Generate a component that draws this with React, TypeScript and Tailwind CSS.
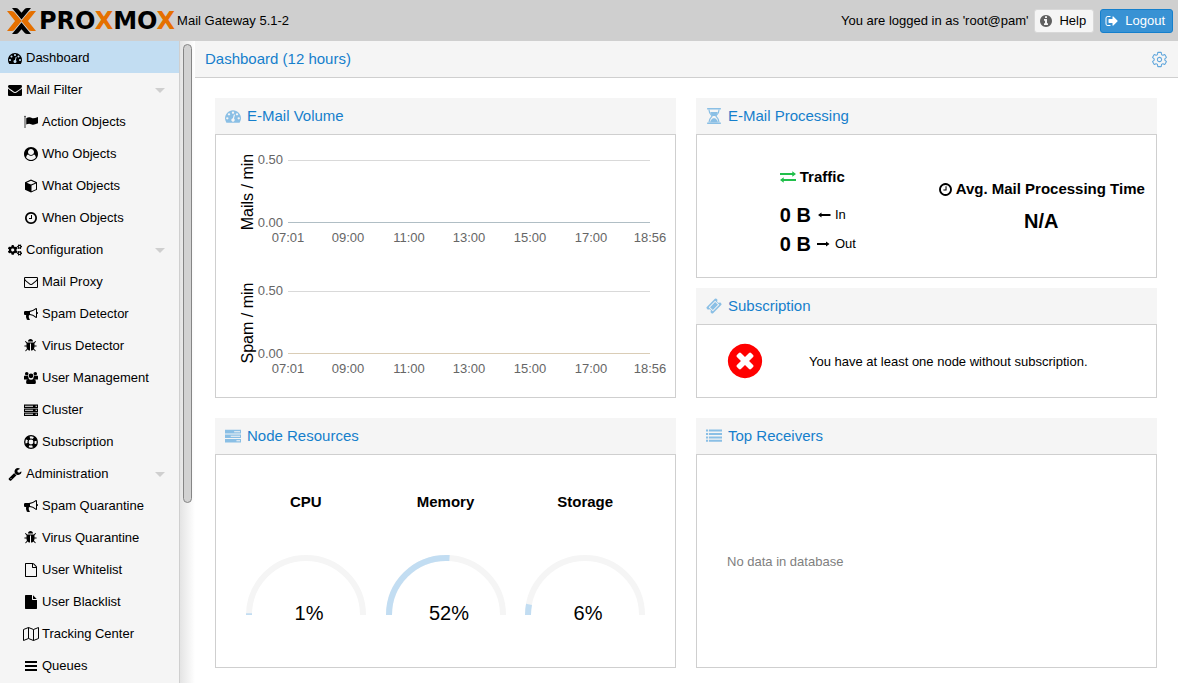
import type { ReactNode } from 'react';
import { FaCogs } from 'react-icons/fa';
import { IoSettingsOutline } from 'react-icons/io5';

/* ---------- Icons ---------- */

const DISC =
  'q0 209-103 385.5t-279.5 279.5-385.5 103-385.5-103-279.5-279.5-103-385.5 103-385.5 279.5-279.5 385.5-103 385.5 103 279.5 279.5 103 385.5z';

const PATHS = {
  dashboard:
    'M384 1152q0-53-37.5-90.5t-90.5-37.5-90.5 37.5-37.5 90.5 37.5 90.5 90.5 37.5 90.5-37.5 37.5-90.5zm192-448q0-53-37.5-90.5t-90.5-37.5-90.5 37.5-37.5 90.5 37.5 90.5 90.5 37.5 90.5-37.5 37.5-90.5zm428 481l101-382q6-26-7.5-48.5t-38.5-29.5-48 6.5-30 39.5l-101 382q-60 5-107 43.5t-63 98.5q-20 77 20 146t117 89 146-20 89-117q16-60-6-117t-72-91zm660-33q0-53-37.5-90.5t-90.5-37.5-90.5 37.5-37.5 90.5 37.5 90.5 90.5 37.5 90.5-37.5 37.5-90.5zm-640-640q0-53-37.5-90.5t-90.5-37.5-90.5 37.5-37.5 90.5 37.5 90.5 90.5 37.5 90.5-37.5 37.5-90.5zm448 192q0-53-37.5-90.5t-90.5-37.5-90.5 37.5-37.5 90.5 37.5 90.5 90.5 37.5 90.5-37.5 37.5-90.5zm320 448q0 261-141 483-19 29-54 29h-1402q-35 0-54-29-141-221-141-483 0-182 71-348t191-286 286-191 348-71 348 71 286 191 191 286 71 348z',
  envelope:
    'M1792 710v794q0 66-47 113t-113 47h-1472q-66 0-113-47t-47-113v-794q44 49 101 87 362 246 497 345 57 42 92.5 65.5t94.5 48 110 24.5h2q51 0 110-24.5t94.5-48 92.5-65.5q170-123 498-345 57-39 100-87zm0-294q0 79-49 151t-122 123q-376 261-468 325-10 7-42.5 31t-54 38.5-52 32.5-57.5 27-50 9h-2q-23 0-50-9t-57.5-27-52-32.5-54-38.5-42.5-31q-91-64-262-182.5t-205-142.5q-62-42-117-115.5t-55-136.5q0-78 41.5-130t118.5-52h1472q65 0 112.5 47t47.5 113z',
  envelopeOpen:
    'M1664 1504v-768q-32 36-69 66-268 206-426 338-51 43-83 67t-86.5 48.5-102.5 24.5h-2q-48 0-102.5-24.5t-86.5-48.5-83-67q-158-132-426-338-37-30-69-66v768q0 13 9.5 22.5t22.5 9.5h1472q13 0 22.5-9.5t9.5-22.5zm0-1051v-24.5l-.5-13-3-12.5-5.5-9-9-7.5-14-2.5h-1472q-13 0-22.5 9.5t-9.5 22.5q0 168 147 284 193 152 401 317 6 5 35 29.5t46 37.5 44.5 31.5 50.5 27.5 43 9h2q20 0 43-9t50.5-27.5 44.5-31.5 46-37.5 35-29.5q208-165 401-317 54-43 100.5-115.5t46.5-131.5zm128-37v1088q0 66-47 113t-113 47h-1472q-66 0-113-47t-47-113v-1088q0-66 47-113t113-47h1472q66 0 113 47t47 113z',
  flag: 'M32 192a96 96 0 1 1 192 0l-48 60v1412h-96v-1412zM288 400q180-120 380-120t430 130q180 40 694-170v830q-514 220-694 170t-430-130q-200 0-380 120z',
  userCircle:
    'M1523 1339q-22-155-87.5-257.5t-184.5-118.5q-67 74-159.5 115.5t-195.5 41.5-195.5-41.5-159.5-115.5q-119 16-184.5 118.5t-87.5 257.5q106 150 271 237.5t356 87.5 356-87.5 271-237.5zm-243-699q0-159-112.5-271.5t-271.5-112.5-271.5 112.5-112.5 271.5 112.5 271.5 271.5 112.5 271.5-112.5 112.5-271.5zm512 256q0 182-71 347.5t-190.5 286-285.5 191.5-349 71q-182 0-348-71t-286-191-191-286-71-348 71-348 191-286 286-191 348-71 348 71 286 191 191 286 71 348z',
  clock:
    'M1024 544v448q0 14-9 23t-23 9h-320q-14 0-23-9t-9-23v-64q0-14 9-23t23-9h224v-352q0-14 9-23t23-9h64q14 0 23 9t9 23zm416 352q0-148-73-273t-198-198-273-73-273 73-198 198-73 273 73 273 198 198 273 73 273-73 198-198 73-273zm224 0' +
    DISC,
  bullhorn:
    'M1664 640q53 0 90.5 37.5t37.5 90.5-37.5 90.5-90.5 37.5v384q0 52-38 90t-90 38q-417-347-812-380-58 19-91 66t-31 100.5 40 92.5q-20 33-23 65.5t6 58 33.5 55 48 50 61.5 50.5q-29 58-111.5 83t-168.5 11.5-132-55.5q-7-23-29.5-87.5t-32-94.5-23-89-15-101 3.5-98.5 22-110.5h-122q-66 0-113-47t-47-113v-192q0-66 47-113t113-47h480q435 0 896-384 52 0 90 38t38 90v384zm-128 604v-954q-394 302-768 343v270q377 42 768 341z',
  bug: 'M1632 896q0 26-19 45t-45 19h-224q0 171-67 290l208 209q19 19 19 45t-19 45q-18 19-45 19t-45-19l-198-197q-5 5-15 13t-42 28.5-65 36.5-82 29-97 13v-896h-128v896q-51 0-101.5-13.5t-87-33-66-39-43.5-32.5l-15-14-183 207q-20 21-48 21-24 0-43-16-19-18-20.5-44.5t15.5-46.5l202-227q-58-114-58-274h-224q-26 0-45-19t-19-45 19-45 45-19h224v-294l-173-173q-19-19-19-45t19-45 45-19 45 19l173 173h844l173-173q19-19 45-19t45 19 19 45-19 45l-173 173v294h224q26 0 45 19t19 45zm-480-576h-640q0-133 93.5-226.5t226.5-93.5 226.5 93.5 93.5 226.5z',
  wrench:
    'M448 1472q0-26-19-45t-45-19-45 19-19 45 19 45 45 19 45-19 19-45zm644-420l-682 682q-37 37-90 37-52 0-91-37l-106-108q-38-36-38-90 0-53 38-91l681-681q39 98 114.5 173.5t173.5 114.5zm634-435q0 39-23 106-47 134-164.5 217.5t-258.5 83.5q-185 0-316.5-131.5t-131.5-316.5 131.5-316.5 316.5-131.5q58 0 121.5 16.5t107.5 46.5q16 11 16 28t-16 28l-293 169v224l193 107q5-3 79-48.5t135.5-81 70.5-35.5q15 0 23.5 10t8.5 25z',
  file: 'M1152 512v-472q22 14 36 28l408 408q14 14 28 36h-472zm-128 32q0 40 28 68t68 28h544v1056q0 40-28 68t-68 28h-1344q-40 0-68-28t-28-68v-1600q0-40 28-68t68-28h800v544z',
  fileOutline:
    'M1596 380q28 28 48 76t20 88v1152q0 40-28 68t-68 28h-1344q-40 0-68-28t-28-68v-1600q0-40 28-68t68-28h896q40 0 88 20t76 48zm-444-244v376h376q-10-29-22-41l-313-313q-12-12-41-22zm384 1528v-1024h-416q-40 0-68-28t-28-68v-416h-768v1536h1280z',
  bars: 'M128 1280h1536v256h-1536zM128 768h1536v256h-1536zM128 256h1536v256h-1536z',
  list: 'M0 176h240v224h-240zM336 176h1456v224h-1456zM0 560h240v224h-240zM336 560h1456v224h-1456zM0 944h240v224h-240zM336 944h1456v224h-1456zM0 1328h240v224h-240zM336 1328h1456v224h-1456z',
  tasks:
    'M0 208h1792v400h-1792zM1024 352v112h656v-112zM0 720h1792v400h-1792zM640 864v112h1040v-112zM0 1232h1792v400h-1792zM1280 1376v112h400v-112z',
  server:
    'M0 192h1792v448h-1792zM128 352v128h1024v-128zM1472 352v128h192v-128zM0 704h1792v448h-1792zM128 864v128h1024v-128zM1472 864v128h192v-128zM0 1216h1792v448h-1792zM128 1376v128h1024v-128zM1472 1376v128h192v-128z',
  cube: 'M896 64l768 352v960l-768 352-768-352v-960zM896 208l-560 256 560 240 560-240zM960 830v740l576-268v-720z',
  users:
    'M896 320a300 300 0 1 1 0 600a300 300 0 1 1 0-600zM350 128a230 230 0 1 1 0 460a230 230 0 1 1 0-460zM1442 128a230 230 0 1 1 0 460a230 230 0 1 1 0-460zM-64 1000q0-420 220-420q190 140 350 10q0 220 150 370q-160 10-250 120h-360q-110 0-110-80zM1856 1000q0-420-220-420q-190 140-350 10q0 220-150 370q160 10 250 120h360q110 0 110-80zM560 980q336 260 672 0q290 30 290 480q0 204-204 204h-844q-204 0-204-204q0-450 290-480z',
  info:
    'M1152 1376v-160q0-14-9-23t-23-9h-96v-512q0-14-9-23t-23-9h-320q-14 0-23 9t-9 23v160q0 14 9 23t23 9h96v320h-96q-14 0-23 9t-9 23v160q0 14 9 23t23 9h448q14 0 23-9t9-23zm-128-896v-160q0-14-9-23t-23-9h-192q-14 0-23 9t-9 23v160q0 14 9 23t23 9h192q14 0 23-9t9-23zm640 416' +
    DISC,
  times:
    'M1277 1122q0-26-19-45l-181-181 181-181q19-19 19-45 0-27-19-46l-90-90q-19-19-46-19-26 0-45 19l-181 181-181-181q-19-19-45-19-27 0-46 19l-90 90q-19 19-19 46 0 26 19 45l181 181-181 181q-19 19-19 45 0 27 19 46l90 90q19 19 46 19 26 0 45-19l181-181 181 181q19 19 45 19 27 0 46-19l90-90q19-19 19-46zm387-226' +
    DISC,
  signOut:
    'M704 1440q0 4 1 20t.5 26.5-3 23.5-10 19.5-20.5 6.5h-320q-119 0-203.5-84.5t-84.5-203.5v-704q0-119 84.5-203.5t203.5-84.5h320q13 0 22.5 9.5t9.5 22.5q0 4 1 20t.5 26.5-3 23.5-10 19.5-20.5 6.5h-320q-66 0-113 47t-47 113v704q0 66 47 113t113 47h312l11.5 1 11.5 3 8 5.5 7 9 2 13.5zm928-544q0 26-19 45l-544 544q-19 19-45 19t-45-19-19-45v-288h-448q-26 0-45-19t-19-45v-384q0-26 19-45t45-19h448v-288q0-26 19-45t45-19 45 19l544 544q19 19 19 45z',
  exchange:
    'M0 448h1376v-192l416 304-416 304v-192h-1376zM1792 1344h-1376v192l-416-304 416-304v192h1376z',
  arrowLeft: 'M1728 768v256h-1152v192l-448-320 448-320v192z',
  arrowRight: 'M0 768v256h1152v192l448-320-448-320v192z',
  hourglass:
    'M128 0h1536v160h-1536zM128 1632h1536v160h-1536zM256 128h128q0 400 384 768q-384 368-384 768h-128q0-440 350-768q-350-328-350-768zM1536 128h-128q0 400-384 768q384 368 384 768h128q0-440-350-768q350-328 350-768zM480 448h832q-80 240-288 448h-256q-208-208-288-448zM416 1664q20-300 352-520h256q332 220 352 520z',
  ticket:
    'M1024 452l316 316-572 572-316-316zM1702 794l-907 908q-37 37-90.500 37t-90.500-37l-126-126q56-56 56-136t-56-136-136-56-136 56l-125-126q-37-37-37-90.500t37-90.500l907-906q37-37 90.500-37t90.500 37l125 125q-56 56-56 136t56 136 136 56 136-56l126 125q37 37 37 90.500t-37 90.500zM1024 300l-724 724 468 468 724-724z',
};

type IconName = keyof typeof PATHS | 'cogs' | 'ring' | 'map';

function Icon({ name, className = 'size-3.5' }: { name: IconName; className?: string }) {
  if (name === 'cogs') return <FaCogs className={className} />;
  if (name === 'ring') {
    return (
      <svg viewBox="0 0 14 14" className={className} fill="none" stroke="currentColor">
        <circle cx="7" cy="7" r="6.3" strokeWidth="1.3" />
        <circle cx="7" cy="7" r="3" strokeWidth="1.2" />
        <circle cx="7" cy="7" r="4.7" strokeWidth="3.4" strokeDasharray="3.7 3.68" strokeDashoffset="-1.9" />
      </svg>
    );
  }
  if (name === 'map') {
    return (
      <svg viewBox="0 0 16 14" className="h-3.5 w-4" fill="none" stroke="currentColor">
        <path d="M.5 2.500l5-2 5 2 5-2v11l-5 2-5-2-5 2zM5.500.5v11M10.500 2.500v11" />
      </svg>
    );
  }
  return (
    <svg viewBox="0 0 1792 1792" className={className} fill="currentColor" fillRule="evenodd">
      <path d={PATHS[name]} />
    </svg>
  );
}

function Logo() {
  return (
    <div className="flex items-center gap-[3px]">
      <svg viewBox="0 0 29 26" className="h-[26px] w-[29px]">
        <path fill="#e57000" d="M0 3h4.500q2 0 3.500 1.500l7 8.500-7 8.500q-1.500 1.500-3.500 1.500h-4.500l8-10z" />
        <path fill="#e57000" d="M29 3h-4.500q-2 0-3.500 1.500l-7 8.500 7 8.500q1.500 1.500 3.500 1.500h4.500l-8-10z" />
        <path
          stroke="#cfcfcf"
          strokeWidth="1.600"
          paintOrder="stroke"
          d="M5 0h3.500q2 0 3 1.200l3 3.600 3-3.600q1-1.200 3-1.200h3.500l-9.500 11.500zM5 26h3.500q2 0 3-1.200l3-3.600 3 3.600q1 1.200 3 1.200h3.500l-9.500-11.500z"
        />
      </svg>
      <span className="font-['DejaVu_Sans',sans-serif] text-2xl leading-none font-bold">
        PRO<span className="text-[#e57000]">X</span>MO<span className="text-[#e57000]">X</span>
      </span>
    </div>
  );
}

/* ---------- Navigation ---------- */

interface NavEntry {
  label: string;
  icon: IconName;
  children?: NavEntry[];
}

const NAV: NavEntry[] = [
  { label: 'Dashboard', icon: 'dashboard' },
  {
    label: 'Mail Filter',
    icon: 'envelope',
    children: [
      { label: 'Action Objects', icon: 'flag' },
      { label: 'Who Objects', icon: 'userCircle' },
      { label: 'What Objects', icon: 'cube' },
      { label: 'When Objects', icon: 'clock' },
    ],
  },
  {
    label: 'Configuration',
    icon: 'cogs',
    children: [
      { label: 'Mail Proxy', icon: 'envelopeOpen' },
      { label: 'Spam Detector', icon: 'bullhorn' },
      { label: 'Virus Detector', icon: 'bug' },
      { label: 'User Management', icon: 'users' },
      { label: 'Cluster', icon: 'server' },
      { label: 'Subscription', icon: 'ring' },
    ],
  },
  {
    label: 'Administration',
    icon: 'wrench',
    children: [
      { label: 'Spam Quarantine', icon: 'bullhorn' },
      { label: 'Virus Quarantine', icon: 'bug' },
      { label: 'User Whitelist', icon: 'fileOutline' },
      { label: 'User Blacklist', icon: 'file' },
      { label: 'Tracking Center', icon: 'map' },
      { label: 'Queues', icon: 'bars' },
    ],
  },
];

function NavLink({ entry, nested = false }: { entry: NavEntry; nested?: boolean }) {
  const active = entry.label === 'Dashboard';
  return (
    <a
      href="#"
      className={`flex h-8 items-center pt-0.5 pr-3.5 ${nested ? 'pl-[23px]' : 'pl-[7px]'} ${active ? 'bg-[#c2ddf2]' : ''}`}
    >
      <span className="mr-[3px] flex w-4 justify-center">
        <Icon name={entry.icon} />
      </span>
      {entry.label}
      {entry.children && (
        <svg viewBox="0 0 10 5" className="ml-auto h-[5px] w-2.5 fill-[#cfcfcf]">
          <path d="M0 0h10l-5 5z" />
        </svg>
      )}
    </a>
  );
}

function Sidebar() {
  return (
    <div className="flex w-[195px] shrink-0">
      <nav className="w-[179px] bg-[#f5f5f5]">
        <ul>
          {NAV.map((entry) => (
            <li key={entry.label}>
              <NavLink entry={entry} />
              {entry.children && (
                <ul>
                  {entry.children.map((child) => (
                    <li key={child.label}>
                      <NavLink entry={child} nested />
                    </li>
                  ))}
                </ul>
              )}
            </li>
          ))}
        </ul>
      </nav>
      {/* Scrollbar */}
      <div className="w-4 border-l border-[#cfcfcf] bg-linear-to-r from-[#e4e4e4] to-white pt-[3px] pl-[3px]">
        <div className="h-[459px] w-[9px] rounded-full border border-[#858585] bg-[#d2d2d2]" />
      </div>
    </div>
  );
}

/* ---------- Dashboard panels ---------- */

interface PanelProps {
  title: string;
  icon: IconName;
  bodyClass?: string;
  className?: string;
  children: ReactNode;
}

function Panel({ title, icon, bodyClass = '', className = '', children }: PanelProps) {
  return (
    <section className={`flex flex-col ${className}`}>
      <h2 className="flex h-9 items-center gap-1.5 bg-[#f5f5f5] pl-2.5 text-[15px] text-[#157fcc]">
        <span className="text-[#8abfe5]">
          <Icon name={icon} className="size-4" />
        </span>
        {title}
      </h2>
      <div className={`grow border border-[#cfcfcf] ${bodyClass}`}>{children}</div>
    </section>
  );
}

const TICKS = [
  { x: 72, label: '07:01' },
  { x: 132, label: '09:00' },
  { x: 193, label: '11:00' },
  { x: 253, label: '13:00' },
  { x: 314, label: '15:00' },
  { x: 375, label: '17:00' },
  { x: 434, label: '18:56' },
];

function RateChart({ label, color }: { label: string; color: string }) {
  return (
    <svg viewBox="0 0 459 131" className="block w-full" role="img" aria-label={label}>
      <text x="37" y="57" fontSize="16" textAnchor="middle" transform="rotate(-90 37 57)">
        {label}
      </text>
      <path d="M72 25.500h362" stroke="#d9d9d9" />
      <path d="M72 87.500h362" stroke={color} />
      <g fontSize="13" fill="#666">
        <text x="67" y="29" textAnchor="end">0.50</text>
        <text x="67" y="92" textAnchor="end">0.00</text>
        {TICKS.map((tick) => (
          <text key={tick.label} x={tick.x} y="107" textAnchor="middle">
            {tick.label}
          </text>
        ))}
      </g>
    </svg>
  );
}

function Gauge({ label, percent }: { label: string; percent: number }) {
  const arc = 'M3 60a57 57 0 0 1 114 0';
  return (
    <div className="flex flex-1 flex-col items-center">
      <h3 className="text-[15px] leading-5 font-bold">{label}</h3>
      <svg viewBox="0 0 120 70" className="mt-[43px] h-[70px] w-[120px]">
        <path d={arc} fill="none" stroke="#f5f5f5" strokeWidth="6" />
        <path d={arc} fill="none" stroke="#c2ddf2" strokeWidth="6" pathLength="100" strokeDasharray={`${percent} 100`} />
        <text x="63" y="65" fontSize="20" textAnchor="middle">
          {percent}%
        </text>
      </svg>
    </div>
  );
}

function TrafficRow({ icon, label }: { icon: IconName; label: string }) {
  return (
    <div className="flex h-[29px] items-center">
      <span className="text-xl font-bold whitespace-nowrap">0 B</span>
      <span className="mr-1 ml-1.5">
        <Icon name={icon} />
      </span>
      {label}
    </div>
  );
}

function Dashboard() {
  return (
    <main className="min-w-0 grow bg-white">
      <div className="flex h-[37px] items-center justify-between border-b border-[#cfcfcf] bg-[#f5f5f5] px-2.5">
        <h1 className="text-[15px] text-[#157fcc]">Dashboard (12 hours)</h1>
        <button type="button" aria-label="Settings" className="text-[#5fa6dc]">
          <IoSettingsOutline className="size-[17px]" />
        </button>
      </div>

      <div className="grid grid-cols-2 gap-5 pt-5 pr-[21px] pb-[15px] pl-5">
        <Panel title="E-Mail Volume" icon="dashboard">
          <RateChart label="Mails / min" color="#b0bec5" />
          <RateChart label="Spam / min" color="#dacdb6" />
        </Panel>

        <div className="flex flex-col gap-2.5">
          <Panel title="E-Mail Processing" icon="hourglass" bodyClass="flex min-h-36" className="grow">
            <div className="flex flex-1 justify-center pt-8">
              <div className="w-16">
                <h3 className="mb-[13px] flex h-5 items-center gap-1 text-[15px] font-bold">
                  <span className="text-[#21bf4b]">
                    <Icon name="exchange" className="size-4" />
                  </span>
                  Traffic
                </h3>
                <TrafficRow icon="arrowLeft" label="In" />
                <TrafficRow icon="arrowRight" label="Out" />
              </div>
            </div>
            <div className="flex flex-1 flex-col items-center pt-11">
              <h3 className="flex h-5 items-center gap-[3px] text-[15px] font-bold whitespace-nowrap">
                <Icon name="clock" className="size-[15px]" />
                Avg. Mail Processing Time
              </h3>
              <p className="mt-2 text-xl font-bold">N/A</p>
            </div>
          </Panel>
          <Panel title="Subscription" icon="ticket" bodyClass="flex min-h-[74px] items-center gap-11 pl-7">
            <span className="text-[#ff0000]">
              <Icon name="times" className="size-10" />
            </span>
            <p className="pt-0.5">You have at least one node without subscription.</p>
          </Panel>
        </div>

        <Panel title="Node Resources" icon="tasks" bodyClass="flex min-h-[214px] px-5 pt-[37px]">
          <Gauge label="CPU" percent={1} />
          <Gauge label="Memory" percent={52} />
          <Gauge label="Storage" percent={6} />
        </Panel>

        <Panel title="Top Receivers" icon="list" bodyClass="flex min-h-[214px] items-center pl-[30px]">
          <p className="pt-0.5 text-[#808080]">No data in database</p>
        </Panel>
      </div>
    </main>
  );
}

export default function App() {
  return (
    <div className="flex h-screen flex-col overflow-hidden font-['Liberation_Sans',Arial,sans-serif] text-[13px] leading-5 text-black">
      <header className="flex h-[41px] shrink-0 items-center bg-[#cfcfcf] pr-[5px] pl-[7px]">
        <Logo />
        <span className="ml-0.5">Mail Gateway 5.1-2</span>
        <span className="mr-1.5 ml-auto">You are logged in as 'root@pam'</span>
        <button
          type="button"
          className="mr-1.5 flex h-6 items-center gap-1.5 rounded-[3px] border border-[#d8d8d8] bg-[#f5f5f5] pr-[7px] pl-1"
        >
          <span className="text-[#5f5f5f]">
            <Icon name="info" />
          </span>
          Help
        </button>
        <button
          type="button"
          className="flex h-6 items-center gap-1.5 rounded-[3px] border border-[#157fcc] bg-[#3892d4] pr-[7px] pl-1 text-white"
        >
          <Icon name="signOut" />
          Logout
        </button>
      </header>
      <div className="flex min-h-0 grow">
        <Sidebar />
        <Dashboard />
      </div>
    </div>
  );
}
